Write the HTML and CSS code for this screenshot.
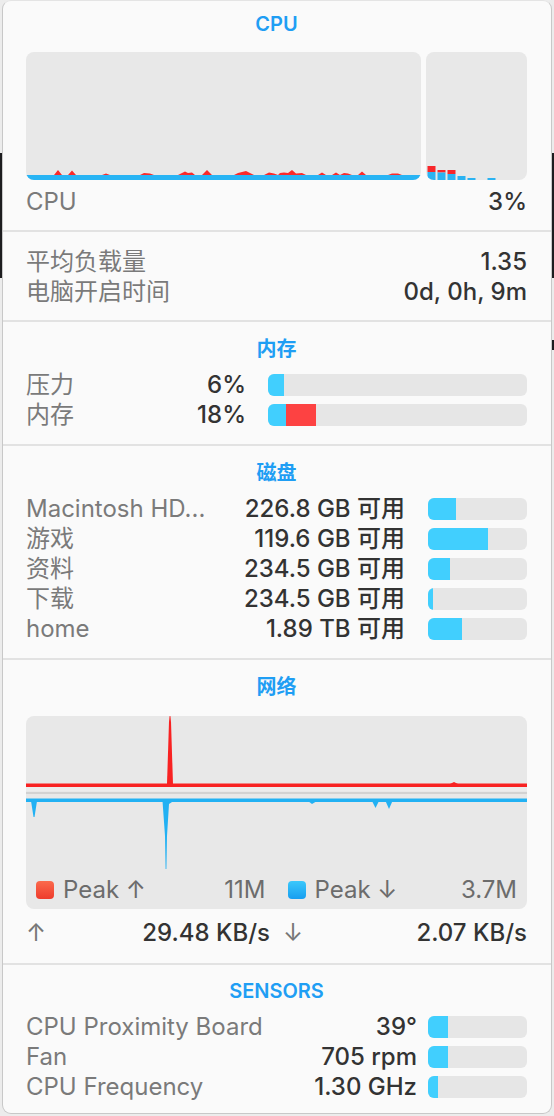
FILE: index.html
```html
<!DOCTYPE html>
<html lang="zh">
<head>
<meta charset="utf-8">
<title>Stats</title>
<link rel="stylesheet" href="styles.css">
</head>
<body>
<div class="window">
  <section class="section s-cpu">
    <div class="title">CPU</div>
    <div class="cpu-charts">
      <div class="chart cpu-line">
        <svg width="395" height="128" viewBox="0 0 395 128">
          <path fill="#fb2a2a" d="M0,123 L28,123 L32,118 L36,123 L42,123 L46,118.5 L50,123 L76,123 L80,121.5 L84,123 L114,123 L118,121 L124,121.5 L128,123 L152,123 L156,121 L159,119.5 L162,121 L166,120.5 L169,123 L176,123 L181,118 L186,123 L208,123 L212,121 L216,120 L220,119 L224,121 L228,123 L238,123 L243,120.5 L248,121.5 L252,123 L254,121 L258,120.5 L262,121 L266,118 L270,121.5 L276,121 L280,123 L292,123 L296,120.5 L300,123 L306,123 L310,120.5 L314,123 L318,121 L322,121.5 L326,123 L332,123 L336,119.5 L340,123 L362,123 L366,121.5 L372,121.5 L376,123 L395,123 Z"/>
          <rect x="0" y="123" width="395" height="5" fill="#28b4f4"/>
        </svg>
      </div>
      <div class="chart cpu-bars">
        <svg width="101" height="128" viewBox="0 0 101 128">
          <rect x="1.5" y="114" width="8" height="6" fill="#f8262a"/>
          <rect x="1.5" y="120" width="8" height="8" fill="#2bb3f2"/>
          <rect x="11.5" y="118" width="8" height="2.5" fill="#f8262a"/>
          <rect x="11.5" y="120.5" width="8" height="7.5" fill="#2bb3f2"/>
          <rect x="21.5" y="118" width="8" height="4" fill="#f8262a"/>
          <rect x="21.5" y="122" width="8" height="6" fill="#2bb3f2"/>
          <rect x="31.5" y="124" width="8" height="4" fill="#2bb3f2"/>
          <rect x="41.5" y="126" width="8" height="2" fill="#2bb3f2"/>
          <rect x="61.5" y="126" width="8" height="2" fill="#2bb3f2"/>
        </svg>
      </div>
    </div>
    <div class="row-split">
      <span class="label">CPU</span>
      <span class="value">3%</span>
    </div>
  </section>

  <section class="section s-load">
    <div class="row-split">
      <span class="label">平均负载量</span>
      <span class="value">1.35</span>
    </div>
    <div class="row-split">
      <span class="label">电脑开启时间</span>
      <span class="value">0d, 0h, 9m</span>
    </div>
  </section>

  <section class="section s-mem">
    <div class="title">内存</div>
    <div class="rows">
      <div class="row row-mem">
        <div class="lv"><span class="label">压力</span><span class="value">6%</span></div>
        <div class="bar"><span class="fill blue" style="width:6%"></span></div>
      </div>
      <div class="row row-mem">
        <div class="lv"><span class="label">内存</span><span class="value">18%</span></div>
        <div class="bar"><span class="fill blue" style="width:7%"></span><span class="fill red" style="width:11.6%"></span></div>
      </div>
    </div>
  </section>

  <section class="section s-disk">
    <div class="title">磁盘</div>
    <div class="rows">
      <div class="row row-disk">
        <div class="lv"><span class="label">Macintosh HD...</span><span class="value">226.8 GB 可用</span></div>
        <div class="bar"><span class="fill blue" style="width:28%"></span></div>
      </div>
      <div class="row row-disk">
        <div class="lv"><span class="label">游戏</span><span class="value">119.6 GB 可用</span></div>
        <div class="bar"><span class="fill blue" style="width:61%"></span></div>
      </div>
      <div class="row row-disk">
        <div class="lv"><span class="label">资料</span><span class="value">234.5 GB 可用</span></div>
        <div class="bar"><span class="fill blue" style="width:22%"></span></div>
      </div>
      <div class="row row-disk">
        <div class="lv"><span class="label">下载</span><span class="value">234.5 GB 可用</span></div>
        <div class="bar"><span class="fill blue" style="width:5%"></span></div>
      </div>
      <div class="row row-disk">
        <div class="lv"><span class="label">home</span><span class="value">1.89 TB 可用</span></div>
        <div class="bar"><span class="fill blue" style="width:34%"></span></div>
      </div>
    </div>
  </section>

  <section class="section s-net">
    <div class="title">网络</div>
    <div class="chart net-chart">
      <svg width="501" height="158" viewBox="0 0 501 158">
        <rect x="0" y="71" width="501" height="4" fill="#ececec"/>
        <rect x="0" y="76" width="501" height="2" fill="#d2d2d2"/>
        <rect x="0" y="67.5" width="501" height="3.5" fill="#f82222"/>
        <path fill="#f82222" d="M141,68 L143,6 L143.6,0 L144.4,0 L145,6 L147,68 Z"/>
        <path fill="#f82222" d="M424,68 L428,66 L432,68 Z"/>
        <rect x="0" y="82.5" width="501" height="3.5" fill="#22b1f3"/>
        <path fill="#22b1f3" d="M5,85 L7.5,101 L8.5,101 L11,85 Z"/>
        <path fill="#22b1f3" d="M136.5,85 L139,120 L139.6,153 L140.4,153 L141,120 L143,88 L146,86 L148,85 Z"/>
        <path fill="#22b1f3" d="M282,85 L286,88 L291,85 Z"/>
        <path fill="#22b1f3" d="M346,85 L349.5,92 L353,85 Z"/>
        <path fill="#22b1f3" d="M359.5,85 L363,93 L366.5,85 Z"/>
      </svg>
      <div class="legend">
        <div class="legend-item">
          <span class="sq sq-red"></span><span class="ltext">Peak ↑</span><span class="lval">11M</span>
        </div>
        <div class="legend-item">
          <span class="sq sq-blue"></span><span class="ltext">Peak ↓</span><span class="lval">3.7M</span>
        </div>
      </div>
    </div>
    <div class="speeds">
      <div class="speed"><span class="arrow">↑</span><span class="value">29.48 KB/s</span></div>
      <div class="speed"><span class="arrow">↓</span><span class="value">2.07 KB/s</span></div>
    </div>
  </section>

  <section class="section s-sens">
    <div class="title">SENSORS</div>
    <div class="rows">
      <div class="row row-sens">
        <div class="lv"><span class="label">CPU Proximity Board</span><span class="value">39°</span></div>
        <div class="bar"><span class="fill blue" style="width:20%"></span></div>
      </div>
      <div class="row row-sens">
        <div class="lv"><span class="label">Fan</span><span class="value">705 rpm</span></div>
        <div class="bar"><span class="fill blue" style="width:20%"></span></div>
      </div>
      <div class="row row-sens">
        <div class="lv"><span class="label">CPU Frequency</span><span class="value">1.30 GHz</span></div>
        <div class="bar"><span class="fill blue" style="width:10%"></span></div>
      </div>
    </div>
  </section>
</div>
</body>
</html>
```

FILE: styles.css
```css
html, body {
  margin: 0;
  padding: 0;
}
body {
  width: 554px;
  height: 1116px;
  overflow: hidden;
  background-color: #ececec;
  background-image:
    linear-gradient(#1d1d1f, #1d1d1f),
    linear-gradient(#1d1d1f, #1d1d1f);
  background-repeat: no-repeat, no-repeat;
  background-size: 554px 125px, 2px 10px;
  background-position: 0 153px, 552px 340px;
  font-family: Inter, "Noto Sans CJK SC", sans-serif;
  -webkit-font-smoothing: antialiased;
}
.window {
  margin: 0 2px;
  width: 550px;
  height: 1114px;
  box-sizing: border-box;
  border: 1px solid #c8c8c8;
  border-top-color: #e4e4e4;
  border-radius: 9px;
  background: #fafafa;
  display: flex;
  flex-direction: column;
  overflow: hidden;
}
.section {
  padding: 16px 24px 14px 23px;
  border-bottom: 2px solid #e2e2e2;
  display: flex;
  flex-direction: column;
}
.section:last-child {
  border-bottom: none;
  flex: 1;
}
.s-cpu { padding-top: 12px; padding-bottom: 13px; }
.s-load { padding-top: 15px; padding-bottom: 13px; }
.s-net { padding-bottom: 15px; }
.s-sens { padding-top: 15px; }

.title {
  height: 22px;
  line-height: 22px;
  text-align: center;
  font-size: 20px;
  font-weight: 600;
  color: #1f9ef4;
}
.label {
  color: #7a7a7a;
  font-size: 24px;
  white-space: nowrap;
}
.value {
  color: #333333;
  font-size: 24px;
  font-weight: 500;
  white-space: nowrap;
}
.cpu-charts {
  margin-top: 17px;
  display: flex;
  gap: 5px;
  height: 128px;
}
.chart {
  background: #e8e8e8;
  border-radius: 8px;
  overflow: hidden;
}
.chart svg { display: block; }
.cpu-line { width: 395px; }
.cpu-bars { width: 101px; }

.row-split {
  height: 30px;
  line-height: 30px;
  display: flex;
  justify-content: space-between;
  align-items: center;
}
.s-cpu .row-split { margin-top: 7px; }

.rows {
  margin-top: 10px;
  display: flex;
  flex-direction: column;
}
.row {
  height: 30px;
  display: grid;
  align-items: center;
}
.row-mem { grid-template-columns: 1fr 259px; column-gap: 22px; }
.row-disk { grid-template-columns: 1fr 99px; column-gap: 23px; }
.row-sens { grid-template-columns: 1fr 99px; column-gap: 11px; }
.lv {
  display: flex;
  justify-content: space-between;
  align-items: center;
  line-height: 30px;
  min-width: 0;
}
.bar {
  height: 22px;
  border-radius: 6px;
  background: #e6e6e6;
  overflow: hidden;
  display: flex;
}
.fill { display: block; height: 100%; }
.fill.blue { background: #41cffe; }
.fill.red { background: #fd4242; }

.net-chart {
  margin-top: 18px;
  height: 193px;
  display: flex;
  flex-direction: column;
}
.legend {
  flex: 1;
  display: grid;
  grid-template-columns: 1fr 1fr;
  column-gap: 22px;
  padding: 0 10px 4px 10px;
  align-items: center;
}
.legend-item {
  display: flex;
  align-items: center;
  color: #6c6c6c;
  font-size: 24px;
}
.sq {
  width: 18px;
  height: 18px;
  border-radius: 4px;
  margin-right: 9px;
  flex: none;
}
.sq-red { background: linear-gradient(to bottom, #fb6a4d, #ee3c2c); }
.sq-blue { background: linear-gradient(to bottom, #3bc8fb, #179ef0); }
.lval { margin-left: auto; }

.speeds {
  margin-top: 9px;
  height: 30px;
  line-height: 30px;
  display: grid;
  grid-template-columns: 1fr 1fr;
  column-gap: 13px;
}
.speed {
  display: flex;
  justify-content: space-between;
  align-items: center;
}
.arrow {
  color: #777777;
  font-size: 24px;
}
```
